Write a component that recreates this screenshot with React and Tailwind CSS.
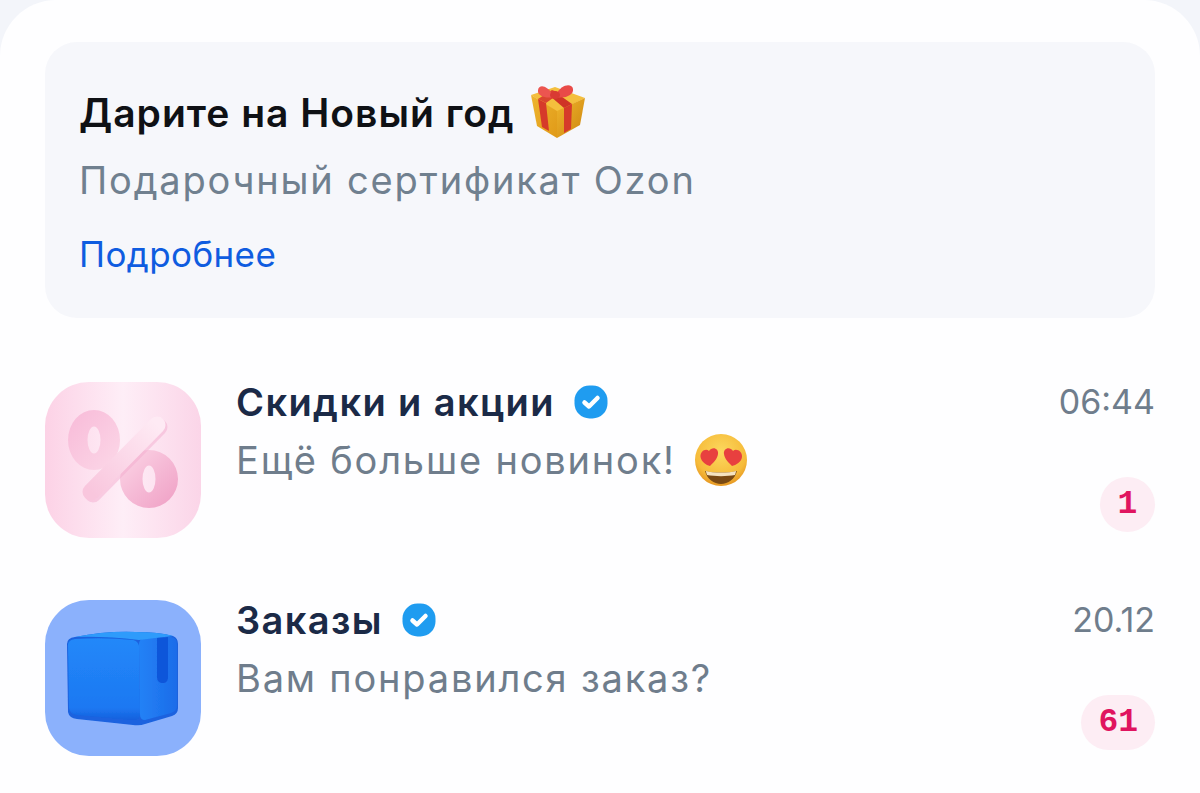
import React from "react";

const font = { fontFamily: 'Inter, "Noto Sans", sans-serif' };

const GiftEmoji = () => (
  <svg width="60" height="60" viewBox="0 0 60 60" className="shrink-0">
    <defs>
      <linearGradient id="giftLeft" x1="0" y1="0" x2="1" y2="1">
        <stop offset="0" stopColor="#eeb52f" />
        <stop offset="1" stopColor="#e09a18" />
      </linearGradient>
      <linearGradient id="giftRight" x1="0" y1="0" x2="1" y2="1">
        <stop offset="0" stopColor="#f0b52c" />
        <stop offset="1" stopColor="#cd8610" />
      </linearGradient>
    </defs>
    <path d="M3 13 L27 5 L57 16 L29 30 Z" fill="#f4bf3d" />
    <path d="M3 13 L29 29 L29 56 L9 44 Z" fill="url(#giftLeft)" />
    <path d="M29 29 L57 16 L52 43 L29 56 Z" fill="url(#giftRight)" />
    <path d="M10 17 L18 21 L21 49 L14 45 Z" fill="#d63a2a" />
    <path d="M36 26 L44 22 L43 47 L36 51 Z" fill="#d63a2a" />
    <path d="M10 17 L24 8 L32 11 L18 21 Z" fill="#d9452f" />
    <path d="M36 26 L44 22 L30 12 L22 14 Z" fill="#cf3426" />
    <path d="M25 13 C19 3 11 2 10 8 C9 14 18 17 26 15 Z" fill="#ec5550" />
    <path d="M28 13 C33 2 44 1 45 7 C46 13 37 17 28 15 Z" fill="#e94b48" />
    <ellipse cx="27" cy="13" rx="5" ry="4" fill="#d93a33" />
  </svg>
);

const HeartEyes = () => (
  <svg width="52" height="52" viewBox="0 0 52 52" className="shrink-0">
    <defs>
      <radialGradient id="face" cx="0.5" cy="0.35" r="0.7">
        <stop offset="0" stopColor="#fcd95f" />
        <stop offset="0.7" stopColor="#f6bb3a" />
        <stop offset="1" stopColor="#e18c1b" />
      </radialGradient>
    </defs>
    <circle cx="26" cy="26" r="26" fill="url(#face)" />
    <path d="M14 17 C17 12 24 14 23 20 C22.5 25 18 29 15 32 C11 31 6.5 28 5.5 23 C5 17 11 14 14 17 Z" fill="#e8403f" />
    <path d="M38 17 C35 12 28 14 29 20 C29.5 25 34 29 37 32 C41 31 46.5 28 47 23 C47.5 17 41 14 38 17 Z" fill="#e8403f" />
    <path d="M10 37 C18 39 34 39 42 37 C40 45 33 50 26 50 C19 50 12 45 10 37 Z" fill="#7a4a14" />
    <path d="M11 37 C18 39 34 39 41 37 C41 39 40 40 40 41 C32 42.5 20 42.5 12 41 C12 40 11 39 11 37 Z" fill="#f5e3c0" />
  </svg>
);

const Verified = () => (
  <svg width="34" height="34" viewBox="0 0 34 34" className="shrink-0">
    <rect x="0.5" y="0.5" width="33" height="33" rx="15" fill="#1f9cf0" />
    <path d="M10.5 17.5 L15 21.5 L23.5 13" fill="none" stroke="#fff" strokeWidth="4.5" strokeLinecap="round" strokeLinejoin="round" />
  </svg>
);

const PercentIcon = () => (
  <div className="w-[156px] h-[156px] rounded-[44px] bg-gradient-to-r from-[#fcd2e6] via-[#feeef7] to-[#fbd5e8] flex items-center justify-center shrink-0">
    <svg width="156" height="156" viewBox="0 0 156 156">
      <defs>
        <linearGradient id="ringLeft" x1="0" y1="0" x2="1" y2="1">
          <stop offset="0" stopColor="#f8bad8" />
          <stop offset="1" stopColor="#fcd8e8" />
        </linearGradient>
        <linearGradient id="ringRight" x1="0" y1="0" x2="1" y2="1">
          <stop offset="0" stopColor="#fcd6e7" />
          <stop offset="1" stopColor="#ef9ec4" />
        </linearGradient>
        <linearGradient id="slash" x1="0" y1="1" x2="1" y2="0">
          <stop offset="0" stopColor="#f9c6dd" />
          <stop offset="1" stopColor="#feeaf4" />
        </linearGradient>
        <filter id="softPink">
          <feGaussianBlur stdDeviation="0.6" />
        </filter>
      </defs>
      <g filter="url(#softPink)">
        <path
          fillRule="evenodd"
          d="M23 58 a26 30 0 1 0 52 0 a26 30 0 1 0 -52 0 Z M42.5 58 a6.5 13.5 0 1 1 13 0 a6.5 13.5 0 1 1 -13 0 Z"
          fill="url(#ringLeft)"
        />
        <path
          fillRule="evenodd"
          d="M75 97 a29 29 0 1 0 58 0 a29 29 0 1 0 -58 0 Z M97.5 97 a6.5 13.5 0 1 1 13 0 a6.5 13.5 0 1 1 -13 0 Z"
          fill="url(#ringRight)"
        />
        <line x1="48" y1="112" x2="114" y2="45" stroke="#f2a9cc" strokeOpacity="0.45" strokeWidth="17" strokeLinecap="round" />
        <line x1="46" y1="110" x2="112" y2="43" stroke="url(#slash)" strokeWidth="17" strokeLinecap="round" />
      </g>
    </svg>
  </div>
);

const BoxIcon = () => (
  <div className="w-[156px] h-[156px] rounded-[44px] bg-[#8bb1fc] flex items-center justify-center shrink-0">
    <svg width="156" height="156" viewBox="0 0 156 156">
      <defs>
        <linearGradient id="boxFront" x1="0" y1="0" x2="0" y2="1">
          <stop offset="0" stopColor="#2288f9" />
          <stop offset="0.85" stopColor="#1d78f2" />
          <stop offset="1" stopColor="#1560dd" />
        </linearGradient>
        <linearGradient id="boxSide" x1="0" y1="0" x2="1" y2="0">
          <stop offset="0" stopColor="#2482f6" />
          <stop offset="1" stopColor="#1b6ce9" />
        </linearGradient>
        <filter id="softBlue">
          <feGaussianBlur stdDeviation="0.6" />
        </filter>
      </defs>
      <g filter="url(#softBlue)">
        <path d="M22 44 Q22 38 30 37 Q60 31 90 32 Q115 32 128 36 Q133 38 133 44 L133 108 Q133 114 127 116 L100 124 Q95 126 88 125 L32 119 Q24 118 23 112 Z" fill="#1a62df" />
        <path d="M23 45 Q23 40 30 39 Q60 37 88 40 Q93 41 94 46 L95 114 Q95 120 88 120 L32 115 Q25 114 24 108 Z" fill="url(#boxFront)" />
        <path d="M94 44 Q94 39 100 38 L126 37 Q132 38 132 44 L132 106 Q132 111 126 113 L100 120 Q95 120 95 114 Z" fill="url(#boxSide)" />
        <path d="M30 37 Q60 31 90 32 Q115 32 128 36 Q110 38 94 40 Q60 36 30 37 Z" fill="#2f9bfb" />
        <path d="M112 38 L123 37 L123 77 C123 81 121 83 118 83 C114 83 112 81 112 77 Z" fill="#1157da" />
      </g>
    </svg>
  </div>
);

const ChatRow = ({ icon, title, message, emoji, time, count }) => (
  <div className="flex gap-[35px] h-[156px]">
    {icon}
    <div className="flex-1 flex justify-between">
      <div className="flex flex-col">
        <div className="flex items-center gap-[19px] h-[40px]">
          <span className="text-[38px] font-semibold text-[#1b2a47] leading-none tracking-[1.4px]">{title}</span>
          <Verified />
        </div>
        <div className="flex items-center gap-[19px] h-[54px] mt-[11px]">
          <span className="text-[38px] text-[#6f7d8c] leading-none tracking-[1.8px]">{message}</span>
          {emoji}
        </div>
      </div>
      <div className="flex flex-col items-end justify-between pb-[6px]">
        <span className="text-[34px] h-[40px] flex items-center text-[#6f7d8c] leading-none">{time}</span>
        <span className="min-w-[55px] h-[55px] px-[17px] rounded-full bg-[#fdedf4] text-[#e0145f] text-[33px] font-bold flex items-center justify-center" style={{ fontFamily: '"Liberation Mono", monospace' }}>
          {count}
        </span>
      </div>
    </div>
  </div>
);

export default function App() {
  return (
    <div className="w-[1200px] h-[793px] bg-[#f3f5fa] overflow-hidden" style={font}>
      <div className="h-full bg-[#fefeff] rounded-t-[56px] px-[45px] pt-[42px]">
        <div className="h-[276px] rounded-[32px] bg-[#f6f7fb] px-[34px] pt-[40px]">
          <div className="flex items-center gap-[13px] h-[60px]">
            <span className="text-[39px] font-semibold text-[#0f1115] leading-none tracking-[1px]">Дарите на Новый год</span>
            <GiftEmoji />
          </div>
          <div className="text-[38px] text-[#70808f] leading-none mt-[19px] tracking-[1.8px]">Подарочный сертификат Ozon</div>
          <div className="text-[35px] text-[#0f5ce0] leading-none mt-[38px] tracking-[0.4px]">Подробнее</div>
        </div>
        <div className="flex flex-col gap-[62px] mt-[64px]">
          <ChatRow icon={<PercentIcon />} title="Скидки и акции" message="Ещё больше новинок!" emoji={<HeartEyes />} time="06:44" count="1" />
          <ChatRow icon={<BoxIcon />} title="Заказы" message="Вам понравился заказ?" time="20.12" count="61" />
        </div>
      </div>
    </div>
  );
}
